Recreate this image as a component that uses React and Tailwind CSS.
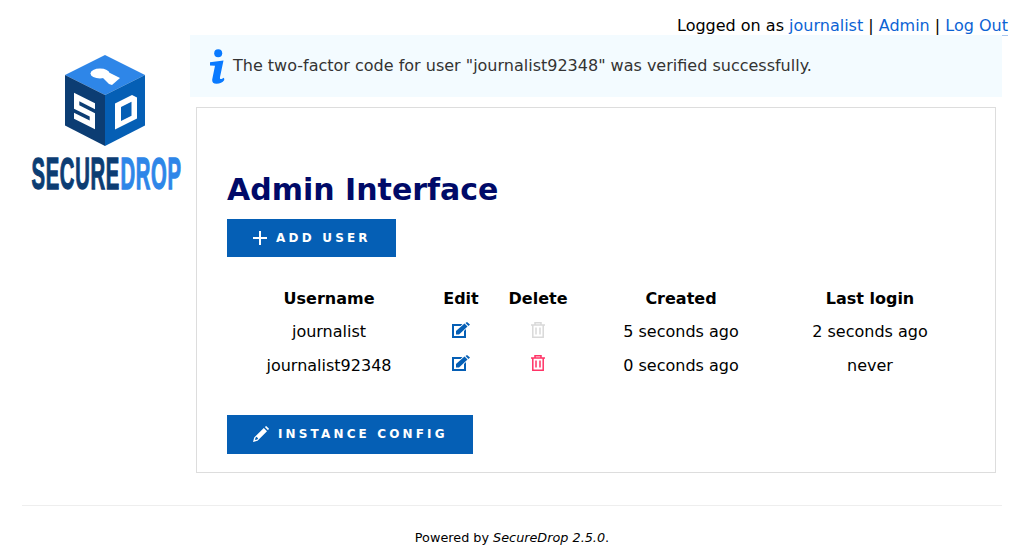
import React from "react";

function Logo() {
  return (
    <svg width="152" height="146" viewBox="30 55 152 146" className="block">
      <polygon points="105,55 145,75 105,95 65,75" fill="#2e86e8" />
      <polygon points="65,75 105,95 105,146 65,125.5" fill="#0c3d73" />
      <polygon points="145,75 105,95 105,146 145,125.5" fill="#055fb5" />
      <ellipse cx="100" cy="73.5" rx="9.5" ry="5" fill="#fff" />
      <polygon points="100,75 106,71 120,78 112,85 109,84" fill="#fff" />
      <g transform="matrix(1,0.5,0,1,74,92.7)">
        <rect x="0" y="0" width="21" height="26" fill="#fff" />
        <rect x="5.3" y="6" width="15.7" height="4" fill="#0c3d73" />
        <rect x="0" y="16" width="15.7" height="4" fill="#0c3d73" />
      </g>
      <g transform="matrix(1,-0.5,0,1,115,103.5)">
        <polygon points="0,0 17,0 22,5 22,26 0,26" fill="#fff" />
        <rect x="6" y="6.5" width="10.5" height="14" fill="#055fb5" />
      </g>
      <text transform="translate(31.5 189) scale(0.45 1)" fontFamily="Liberation Sans" fontWeight="700" fontSize="45" letterSpacing="1.5" fill="#0c3d73" stroke="#0c3d73" strokeWidth="1.3">SECURE</text>
      <text transform="translate(120.5 189) scale(0.45 1)" fontFamily="Liberation Sans" fontWeight="700" fontSize="45" letterSpacing="1.5" fill="#2e86e8" stroke="#2e86e8" strokeWidth="1.3">DROP</text>
    </svg>
  );
}

function InfoIcon() {
  return (
    <svg width="15" height="35" viewBox="0 0 15 35" className="block shrink-0 mt-[1px]" fill="#0a7aff">
      <circle cx="8.2" cy="4.2" r="4" />
      <path d="M0 13.2 L13.5 11.5 L10 28 C9.7 30 10.5 30.3 11.5 30 L14 28.8 L14.3 31 C12.5 33.5 10 34.8 6.5 34.8 C3.5 34.8 1.8 33.3 2.2 30.5 L5 16.8 L0 16.4 Z" />
    </svg>
  );
}

function EditIcon() {
  return (
    <svg width="18" height="16" viewBox="0 0 18 16" className="block" fill="#055fb5">
      <path fillRule="evenodd" d="M0 2h10.5L8.5 4H2v10h10V9l2-2v9H0Z" />
      <path d="M4 9 12.5 1.5 15.5 4.5 7 12.5 4 12.5Z" />
      <path d="M13.5 1 15 0 18 2.5 16.5 4Z" />
    </svg>
  );
}

function TrashIcon({ color }) {
  return (
    <svg width="14" height="16" viewBox="0 0 14 16" className="block" fill="none" stroke={color} strokeWidth="1.5">
      <path d="M0 3h14" />
      <path d="M4 3V0.8h6V3" />
      <path d="M1.8 3v12.2h10.4V3" />
      <path d="M5 5.5v7M9 5.5v7" />
    </svg>
  );
}

function PlusIcon() {
  return (
    <svg width="14" height="14" viewBox="0 0 14 14" className="block" stroke="#fff" strokeWidth="2">
      <path d="M7 0v14M0 7h14" />
    </svg>
  );
}

function PencilIcon() {
  return (
    <svg width="16" height="16" viewBox="0 0 16 16" className="block" fill="#fff">
      <path fillRule="evenodd" d="M0 16 1.2 11.5 10.8 2 14 5.2 4.5 14.8ZM2.5 11.8 2 14l2.2-.6 1-1-1.6-1.6Z" />
      <path d="M11.8 1 13.2 0 16 2.8 15 4.2Z" />
    </svg>
  );
}

const rows = [
  { name: "journalist", created: "5 seconds ago", last: "2 seconds ago", trash: "#d9d9d9", lift: "mb-[4px]" },
  { name: "journalist92348", created: "0 seconds ago", last: "never", trash: "#ff3366", lift: "mb-[6px]" },
];

export default function App() {
  return (
    <div className="w-[1024px] h-[556px] overflow-hidden bg-white text-black font-['DejaVu_Sans',sans-serif] text-base">
      <div className="flex justify-end pr-4 pt-4 h-[35px] leading-[19px]">
        <span>
          Logged on as <a className="text-[#0c63d4]">journalist</a> | <a className="text-[#0c63d4]">Admin</a> |{" "}
          <a className="text-[#0c63d4] border-b border-[#a9c8f0]">Log Out</a>
        </span>
      </div>
      <div className="flex px-[22px]">
        <aside className="w-[168px] shrink-0 pt-5 pl-[8px]">
          <Logo />
        </aside>
        <main className="flex-1 min-w-0">
          <div className="h-[62px] bg-[#f3fbff] flex items-center pl-5 gap-2 text-[#333333] text-base">
            <InfoIcon />
            <span>The two-factor code for user "journalist92348" was verified successfully.</span>
          </div>
          <section className="mx-[6px] mt-[10px] h-[366px] border border-[#dddddd] px-[30px] pt-[62px]">
            <h1 className="text-[30px] font-bold leading-[38px] text-[#000a68] pt-px -mb-px">Admin Interface</h1>
            <button className="mt-[11px] flex items-center gap-[9px] w-[169px] h-[38px] pl-[26px] bg-[#055fb5] text-white text-[12px] font-bold tracking-[3.2px]">
              <PlusIcon />
              ADD USER
            </button>
            <table className="mt-[24px] table-fixed w-[736px] text-center text-[16px]">
              <colgroup>
                <col className="w-[204px]" />
                <col className="w-[60px]" />
                <col className="w-[94px]" />
                <col className="w-[192px]" />
                <col className="w-[186px]" />
              </colgroup>
              <thead>
                <tr className="h-[34px] font-bold">
                  <th className="pt-[2px]">Username</th>
                  <th className="pt-[2px]">Edit</th>
                  <th className="pt-[2px]">Delete</th>
                  <th className="pt-[2px]">Created</th>
                  <th className="pt-[2px]">Last login</th>
                </tr>
              </thead>
              <tbody>
                {rows.map((r) => (
                  <tr key={r.name} className="h-[34px]">
                    <td>{r.name}</td>
                    <td>
                      <div className={"flex justify-center " + r.lift}><EditIcon /></div>
                    </td>
                    <td>
                      <div className={"flex justify-center " + r.lift}><TrashIcon color={r.trash} /></div>
                    </td>
                    <td>{r.created}</td>
                    <td>{r.last}</td>
                  </tr>
                ))}
              </tbody>
            </table>
            <button className="mt-[32px] flex items-center gap-[9px] w-[246px] h-[39px] pl-[26px] pb-[2px] bg-[#055fb5] text-white text-[12px] font-bold tracking-[3.15px]">
              <PencilIcon />
              INSTANCE CONFIG
            </button>
          </section>
        </main>
      </div>
      <footer className="mx-[22px] mt-[32px] border-t border-[#eeeeee] pt-[23px] text-center text-[12.8px] leading-[17px]">
        Powered by <em>SecureDrop 2.5.0</em>.
      </footer>
    </div>
  );
}
